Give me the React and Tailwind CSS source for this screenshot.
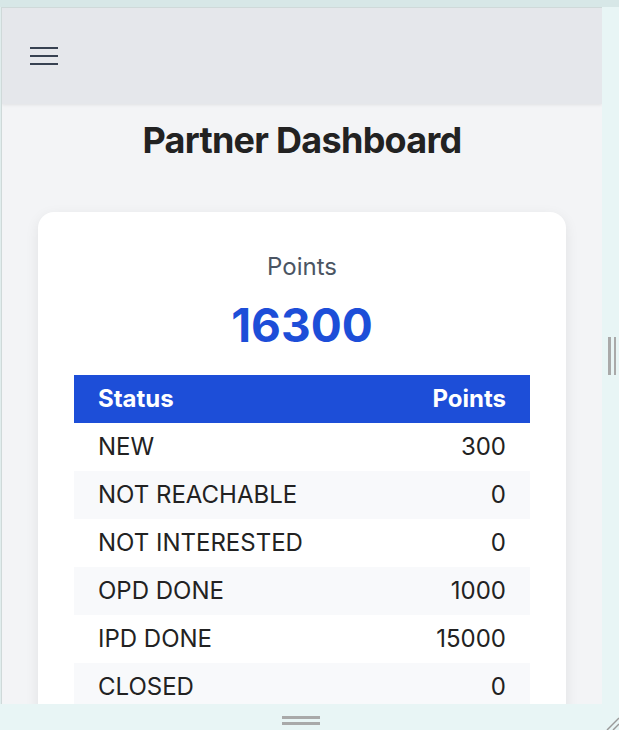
import React from 'react'

const rows = [
  { status: 'NEW', points: 300 },
  { status: 'NOT REACHABLE', points: 0 },
  { status: 'NOT INTERESTED', points: 0 },
  { status: 'OPD DONE', points: 1000 },
  { status: 'IPD DONE', points: 15000 },
  { status: 'CLOSED', points: 0 },
]

export default function App() {
  const total = rows.reduce((acc, r) => acc + r.points, 0)

  return (
    <div className="w-[619px] h-[730px] bg-[#e8f5f5] flex flex-col overflow-hidden font-['Inter',sans-serif]">
      {/* top strip */}
      <div className="h-[7px] bg-[#d7e7e7] shrink-0" />

      <div className="flex h-[697px] shrink-0">
        <div className="w-[1px] bg-[#e0eded]" />
        {/* preview frame */}
        <div className="w-[601px] flex flex-col overflow-hidden border-l border-t border-[#cfd9d9] bg-gray-100">
          <header className="h-[96px] shrink-0 bg-[#e5e7eb] flex items-center pl-[28px] shadow-[0_1px_3px_rgba(0,0,0,0.08)] relative z-10">
            <svg width="28" height="20" viewBox="0 0 28 20" fill="none" stroke="#374151" strokeWidth="2">
              <line x1="0" y1="2" x2="28" y2="2" />
              <line x1="0" y1="10" x2="28" y2="10" />
              <line x1="0" y1="18" x2="28" y2="18" />
            </svg>
          </header>

          <main className="flex-1 pt-[16px]">
            <h1 className="text-center text-[36px] leading-[41px] font-bold tracking-[-0.02em] text-[#222]">
              Partner Dashboard
            </h1>

            <div className="mx-[36px] mt-[51px] bg-white rounded-2xl shadow-[0_4px_14px_rgba(0,0,0,0.08)] px-[36px] pt-[39px] pb-8">
              <p className="text-center text-[24px] leading-[32px] text-[#4b5563]">Points</p>
              <p className="text-center text-[46px] leading-[46px] font-bold text-[#1d4ed8] mt-[19px]">{total}</p>

              <div className="mt-[27px]">
                <div className="h-12 bg-[#1d4ed8] text-white flex items-center justify-between px-6 text-[24px] font-bold">
                  <span>Status</span>
                  <span>Points</span>
                </div>
                {rows.map((r, i) => (
                  <div
                    key={r.status}
                    className={`h-12 flex items-center justify-between px-6 text-[24px] text-[#222] ${i % 2 === 1 ? 'bg-[#f8f9fb]' : 'bg-white'}`}
                  >
                    <span>{r.status}</span>
                    <span>{r.points}</span>
                  </div>
                ))}
              </div>
            </div>
          </main>
        </div>

        {/* right resize strip */}
        <div className="flex-1 flex items-center justify-center pl-[3px]">
          <div className="flex gap-[3px] h-[38px]">
            <div className="w-[3px] bg-[#a9a9a9]" />
            <div className="w-[2px] bg-[#a9a9a9]" />
          </div>
        </div>
      </div>

      {/* bottom strip */}
      <div className="flex-1 relative flex justify-center pt-[12px]">
        <div className="w-[38px] flex flex-col gap-[3px] ml-[-18px]">
          <div className="h-[3px] bg-[#a9a9a9]" />
          <div className="h-[3px] bg-[#a9a9a9]" />
        </div>
        <svg className="absolute right-0 bottom-0" width="14" height="14" viewBox="0 0 14 14" stroke="#9a9a9a" strokeWidth="1.5">
          <line x1="2" y1="14" x2="14" y2="2" />
          <line x1="8" y1="14" x2="14" y2="8" />
        </svg>
      </div>
    </div>
  )
}
